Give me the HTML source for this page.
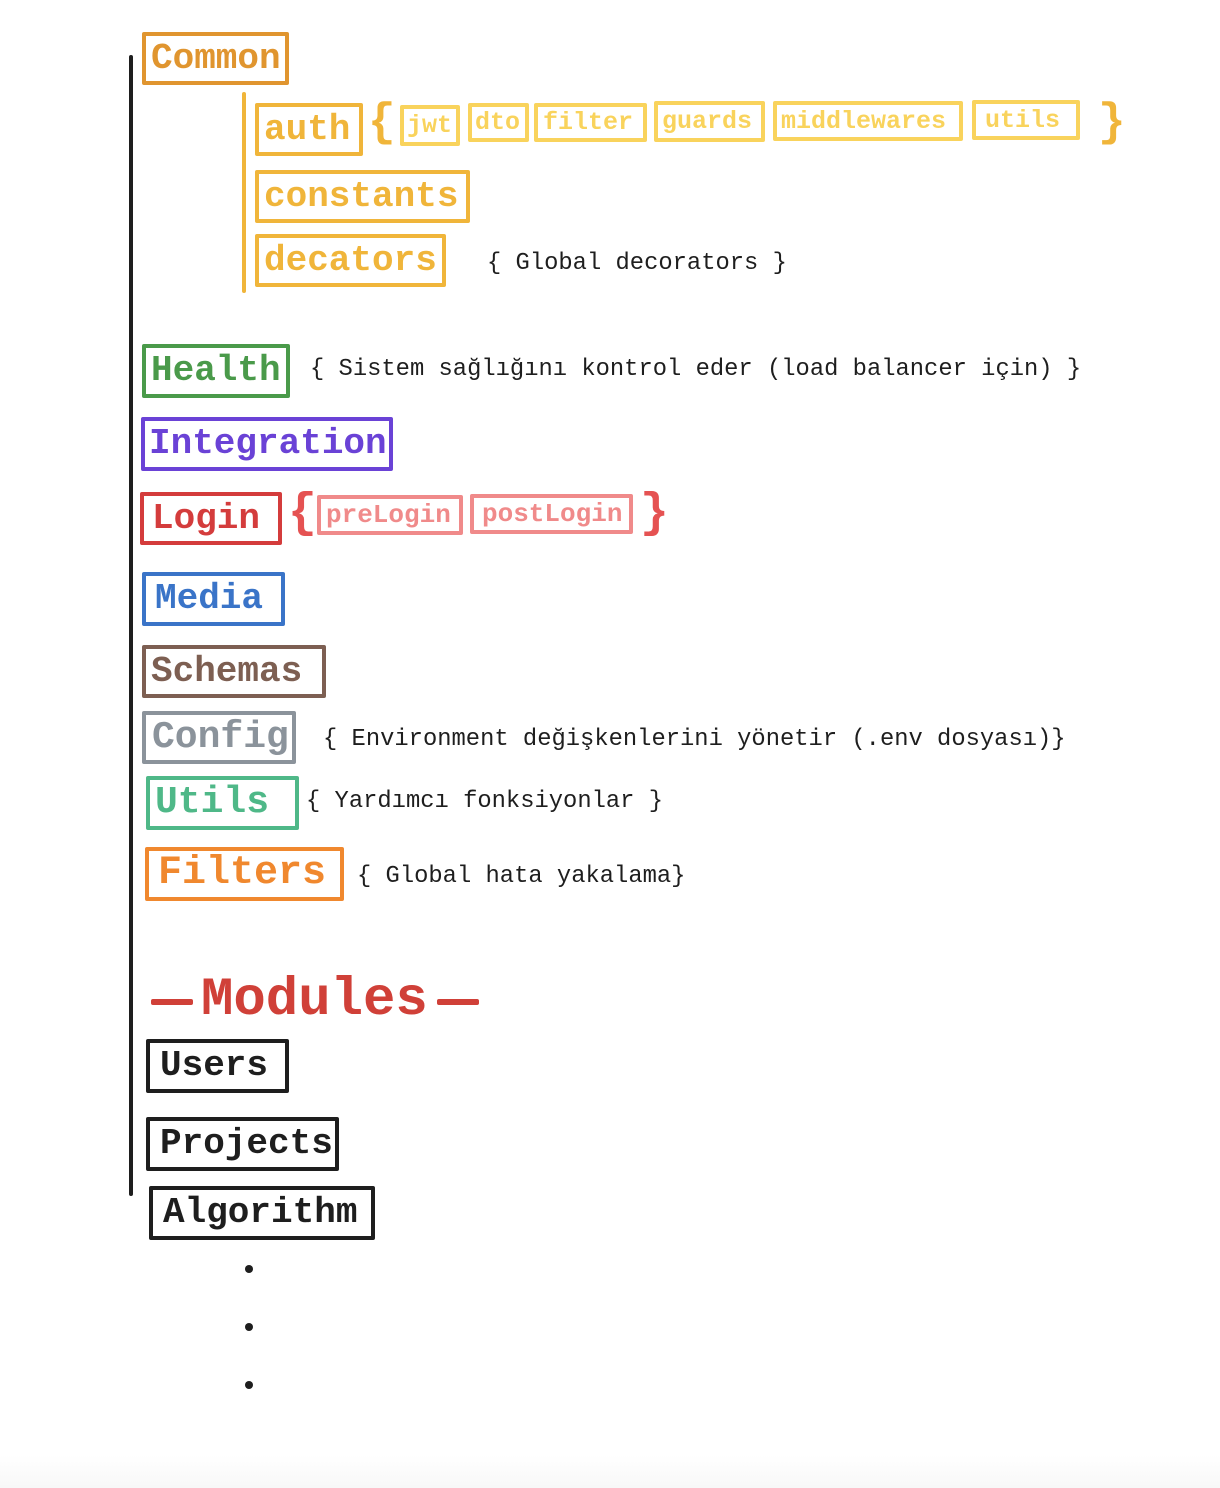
<!DOCTYPE html>
<html><head><meta charset="utf-8"><style>
html,body{margin:0;padding:0;}
body{width:1220px;height:1488px;position:relative;overflow:hidden;background:linear-gradient(#fff 0,#fff 1455px,#f8f8f8 1488px);font-family:"Liberation Mono",monospace;}
.b{position:absolute;box-sizing:border-box;border:4px solid;border-radius:2px;display:flex;align-items:center;padding-left:5px;white-space:nowrap;line-height:1;font-weight:bold;}
.t{position:absolute;white-space:nowrap;font-size:23.8px;color:#1e1e1e;line-height:1;}
.ln{position:absolute;border-radius:2px;}
.dot{position:absolute;width:8px;height:8px;border-radius:50%;background:#1e1e1e;}
.br{position:absolute;line-height:1;font-weight:bold;}
</style></head><body>
<div class="ln" style="left:129px;top:55px;width:4px;height:1141px;background:#1e1e1e"></div>
<div class="ln" style="left:242px;top:92px;width:4px;height:201px;background:#f0b53a"></div>

<div class="b" style="left:142px;top:32px;width:147px;height:53px;border-color:#e0952f;color:#e0952f;font-size:36px">Common</div>
<div class="b" style="left:255px;top:103px;width:108px;height:53px;border-color:#f0b53a;color:#f0b53a;font-size:36px">auth</div>
<div class="br" style="left:368px;top:100px;font-size:46px;color:#f0b53a">{</div>
<div class="b" style="left:400px;top:105px;width:60px;height:41px;border-color:#f9d35c;color:#f9d35c;font-size:25px;padding-left:3px">jwt</div>
<div class="b" style="left:468px;top:103px;width:61px;height:39px;border-color:#f9d35c;color:#f9d35c;font-size:25px;padding-left:3px">dto</div>
<div class="b" style="left:534px;top:103px;width:113px;height:39px;border-color:#f9d35c;color:#f9d35c;font-size:25px">filter</div>
<div class="b" style="left:654px;top:101px;width:111px;height:41px;border-color:#f9d35c;color:#f9d35c;font-size:25px;padding-left:4px">guards</div>
<div class="b" style="left:773px;top:101px;width:190px;height:40px;border-color:#f9d35c;color:#f9d35c;font-size:25px;padding-left:4px">middlewares</div>
<div class="b" style="left:972px;top:100px;width:108px;height:40px;border-color:#f9d35c;color:#f9d35c;font-size:25px;padding-left:9px">utils</div>
<div class="br" style="left:1098px;top:100px;font-size:46px;color:#f0b53a">}</div>
<div class="b" style="left:255px;top:170px;width:215px;height:53px;border-color:#f0b53a;color:#f0b53a;font-size:36px">constants</div>
<div class="b" style="left:255px;top:234px;width:191px;height:53px;border-color:#f0b53a;color:#f0b53a;font-size:36px">decators</div>
<div class="t" style="left:487px;top:252px">{ Global decorators }</div>

<div class="b" style="left:142px;top:344px;width:148px;height:54px;border-color:#4a9a4a;color:#4a9a4a;font-size:36px">Health</div>
<div class="t" style="left:310px;top:358px">{ Sistem sağlığını kontrol eder (load balancer için) }</div>
<div class="b" style="left:141px;top:417px;width:252px;height:54px;border-color:#6a42d6;color:#6a42d6;font-size:36px;padding-left:4px">Integration</div>
<div class="b" style="left:140px;top:492px;width:142px;height:53px;border-color:#d43c3c;color:#d43c3c;font-size:36px;padding-left:8px">Login</div>
<div class="br" style="left:288px;top:490px;font-size:48px;color:#e55252">{</div>
<div class="b" style="left:317px;top:495px;width:146px;height:40px;border-color:#f08a8a;color:#f08a8a;font-size:26px">preLogin</div>
<div class="b" style="left:470px;top:494px;width:163px;height:40px;border-color:#f08a8a;color:#f08a8a;font-size:26px;padding-left:8px">postLogin</div>
<div class="br" style="left:640px;top:490px;font-size:48px;color:#e55252">}</div>
<div class="b" style="left:142px;top:572px;width:143px;height:54px;border-color:#3a74c8;color:#3a74c8;font-size:36px;padding-left:9px">Media</div>
<div class="b" style="left:142px;top:645px;width:184px;height:53px;border-color:#7d5f52;color:#7d5f52;font-size:36px">Schemas</div>
<div class="b" style="left:142px;top:711px;width:154px;height:53px;border-color:#8b939b;color:#8b939b;font-size:38px;padding-left:6px">Config</div>
<div class="t" style="left:323px;top:728px">{ Environment değişkenlerini yönetir (.env dosyası)}</div>
<div class="b" style="left:146px;top:776px;width:153px;height:54px;border-color:#4fb888;color:#4fb888;font-size:38px;padding-left:5px">Utils</div>
<div class="t" style="left:306px;top:790px">{ Yardımcı fonksiyonlar }</div>
<div class="b" style="left:145px;top:847px;width:199px;height:54px;border-color:#f0882e;color:#f0882e;font-size:40px;padding-left:9px">Filters</div>
<div class="t" style="left:357px;top:865px">{ Global hata yakalama}</div>

<div class="ln" style="left:151px;top:999px;width:42px;height:6px;background:#d04038"></div>
<div class="t" style="left:201px;top:974px;font-size:54px;color:#d04038;font-weight:bold">Modules</div>
<div class="ln" style="left:437px;top:999px;width:42px;height:6px;background:#d04038"></div>

<div class="b" style="left:146px;top:1039px;width:143px;height:54px;border-color:#1e1e1e;color:#1e1e1e;font-size:36px;padding-left:10px">Users</div>
<div class="b" style="left:146px;top:1117px;width:193px;height:54px;border-color:#1e1e1e;color:#1e1e1e;font-size:36px;padding-left:10px">Projects</div>
<div class="b" style="left:149px;top:1186px;width:226px;height:54px;border-color:#1e1e1e;color:#1e1e1e;font-size:36px;padding-left:10px">Algorithm</div>

<div class="dot" style="left:245px;top:1265px"></div>
<div class="dot" style="left:245px;top:1323px"></div>
<div class="dot" style="left:245px;top:1381px"></div>
</body></html>
